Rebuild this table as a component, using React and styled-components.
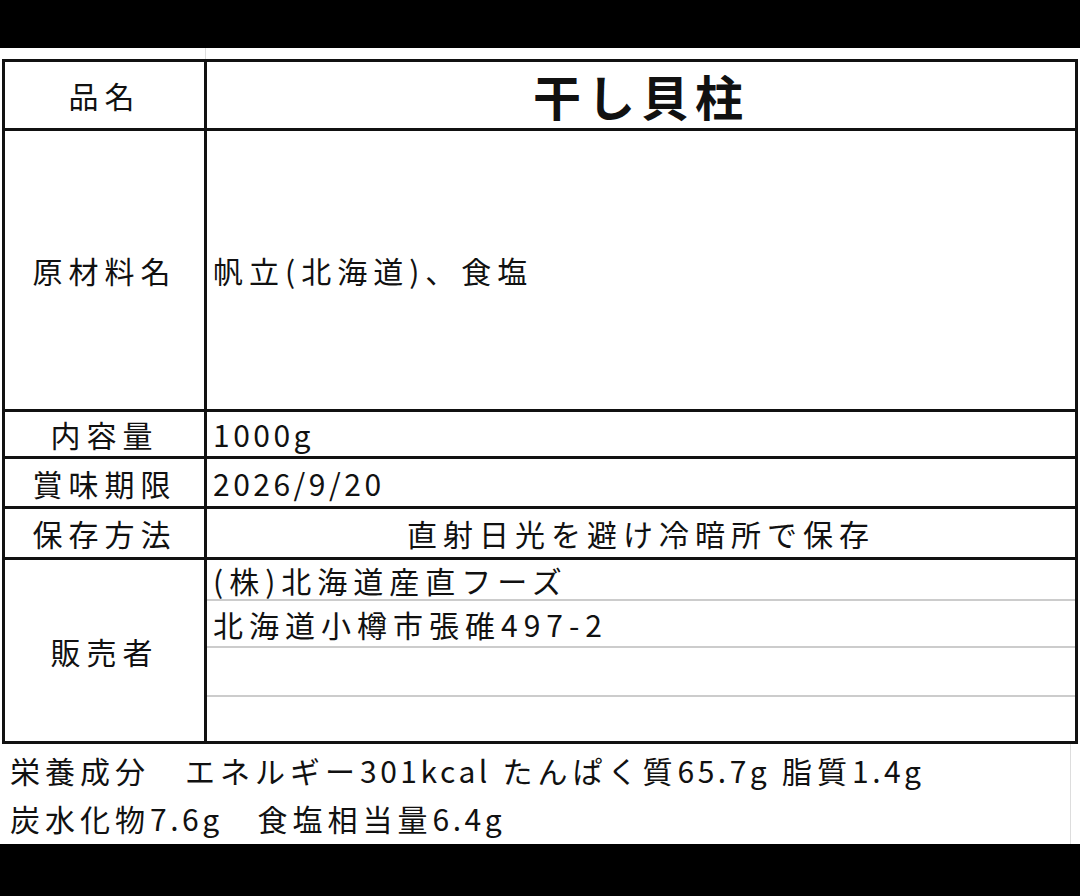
import React from "react";
import styled, { createGlobalStyle } from "styled-components";

const GlobalStyle = createGlobalStyle`
  html, body {
    margin: 0;
    padding: 0;
    background: #000;
  }
  body {
    font-family: "Noto Sans CJK JP", "Noto Sans", sans-serif;
    color: #111;
  }
`;

const seller = ["(株)北海道産直フーズ", "北海道小樽市張碓497-2", "", ""];

const App = () => {
  return (
    <>
      <GlobalStyle />
      <Screen>
        <Bar $h={48} />
        <Sheet>
          <TopGap>
            <GridLine />
          </TopGap>
          <Label>
            <Head>品名</Head>
            <Value $center>
              <Title>干し貝柱</Title>
            </Value>

            <Head>原材料名</Head>
            <Value>帆立(北海道)、食塩</Value>

            <Head>内容量</Head>
            <Value><Num>1000g</Num></Value>

            <Head>賞味期限</Head>
            <Value><Num>2026/9/20</Num></Value>

            <Head>保存方法</Head>
            <Value $center>直射日光を避け冷暗所で保存</Value>

            <Head>販売者</Head>
            <SellerList>
              {seller.map((line, idx) => (
                <SellerRow key={idx}>{line}</SellerRow>
              ))}
            </SellerList>
          </Label>
          <Nutrition>
            <Line>栄養成分　エネルギー<Num>301kcal</Num> たんぱく質<Num>65.7g</Num> 脂質<Num>1.4g</Num></Line>
            <Line>炭水化物<Num>7.6g</Num>　食塩相当量<Num>6.4g</Num></Line>
          </Nutrition>
        </Sheet>
        <Bar $h={52} />
      </Screen>
    </>
  );
};

export default App;

const Screen = styled.div`
  width: 1080px;
  height: 896px;
  display: flex;
  flex-direction: column;
  background: #000;
  overflow: hidden;
`;

const Bar = styled.div`
  height: ${(p) => p.$h}px;
  flex: none;
  background: #000;
`;

const Sheet = styled.div`
  flex: 1;
  background: #fff;
  display: flex;
  flex-direction: column;
`;

const TopGap = styled.div`
  height: 11px;
  display: flex;
`;

const GridLine = styled.div`
  width: 205px;
  border-right: 1px solid #ddd;
`;

const Label = styled.div`
  margin-left: 2px;
  width: 1070px;
  display: grid;
  grid-template-columns: 199px 1fr;
  grid-template-rows: 66px 278px 44px 47px 48px 181px;
  gap: 3px;
  padding: 3px;
  background: #111;
`;

const Head = styled.div`
  background: #fff;
  display: flex;
  align-items: center;
  justify-content: center;
  font-size: 30px;
  letter-spacing: 6px;
  line-height: 1;
`;

const Value = styled.div`
  background: #fff;
  display: flex;
  align-items: center;
  justify-content: ${(p) => (p.$center ? "center" : "flex-start")};
  padding-left: ${(p) => (p.$center ? 0 : 6)}px;
  font-size: 30px;
  letter-spacing: 6px;
  line-height: 1;
  white-space: nowrap;
`;

const Title = styled.span`
  font-size: 48px;
  font-weight: 700;
  letter-spacing: 6px;
`;

const Num = styled.span`
  letter-spacing: 3.5px;
`;

const SellerList = styled.div`
  background: #fff;
  display: grid;
  grid-template-rows: 41px 47px 49px 1fr;
`;

const SellerRow = styled.div`
  display: flex;
  align-items: center;
  padding-left: 6px;
  font-size: 30px;
  letter-spacing: 6px;
  line-height: 1;
  white-space: nowrap;
  &:not(:last-child) {
    border-bottom: 2px solid #ccc;
  }
`;

const Nutrition = styled.div`
  flex: 1;
  padding: 2px 0 0 10px;
  border-right: 1px solid #ddd;
  margin-right: 9px;
`;

const Line = styled.p`
  margin: 0;
  height: 48px;
  line-height: 48px;
  font-size: 30px;
  letter-spacing: 5px;
  white-space: pre;
`;
